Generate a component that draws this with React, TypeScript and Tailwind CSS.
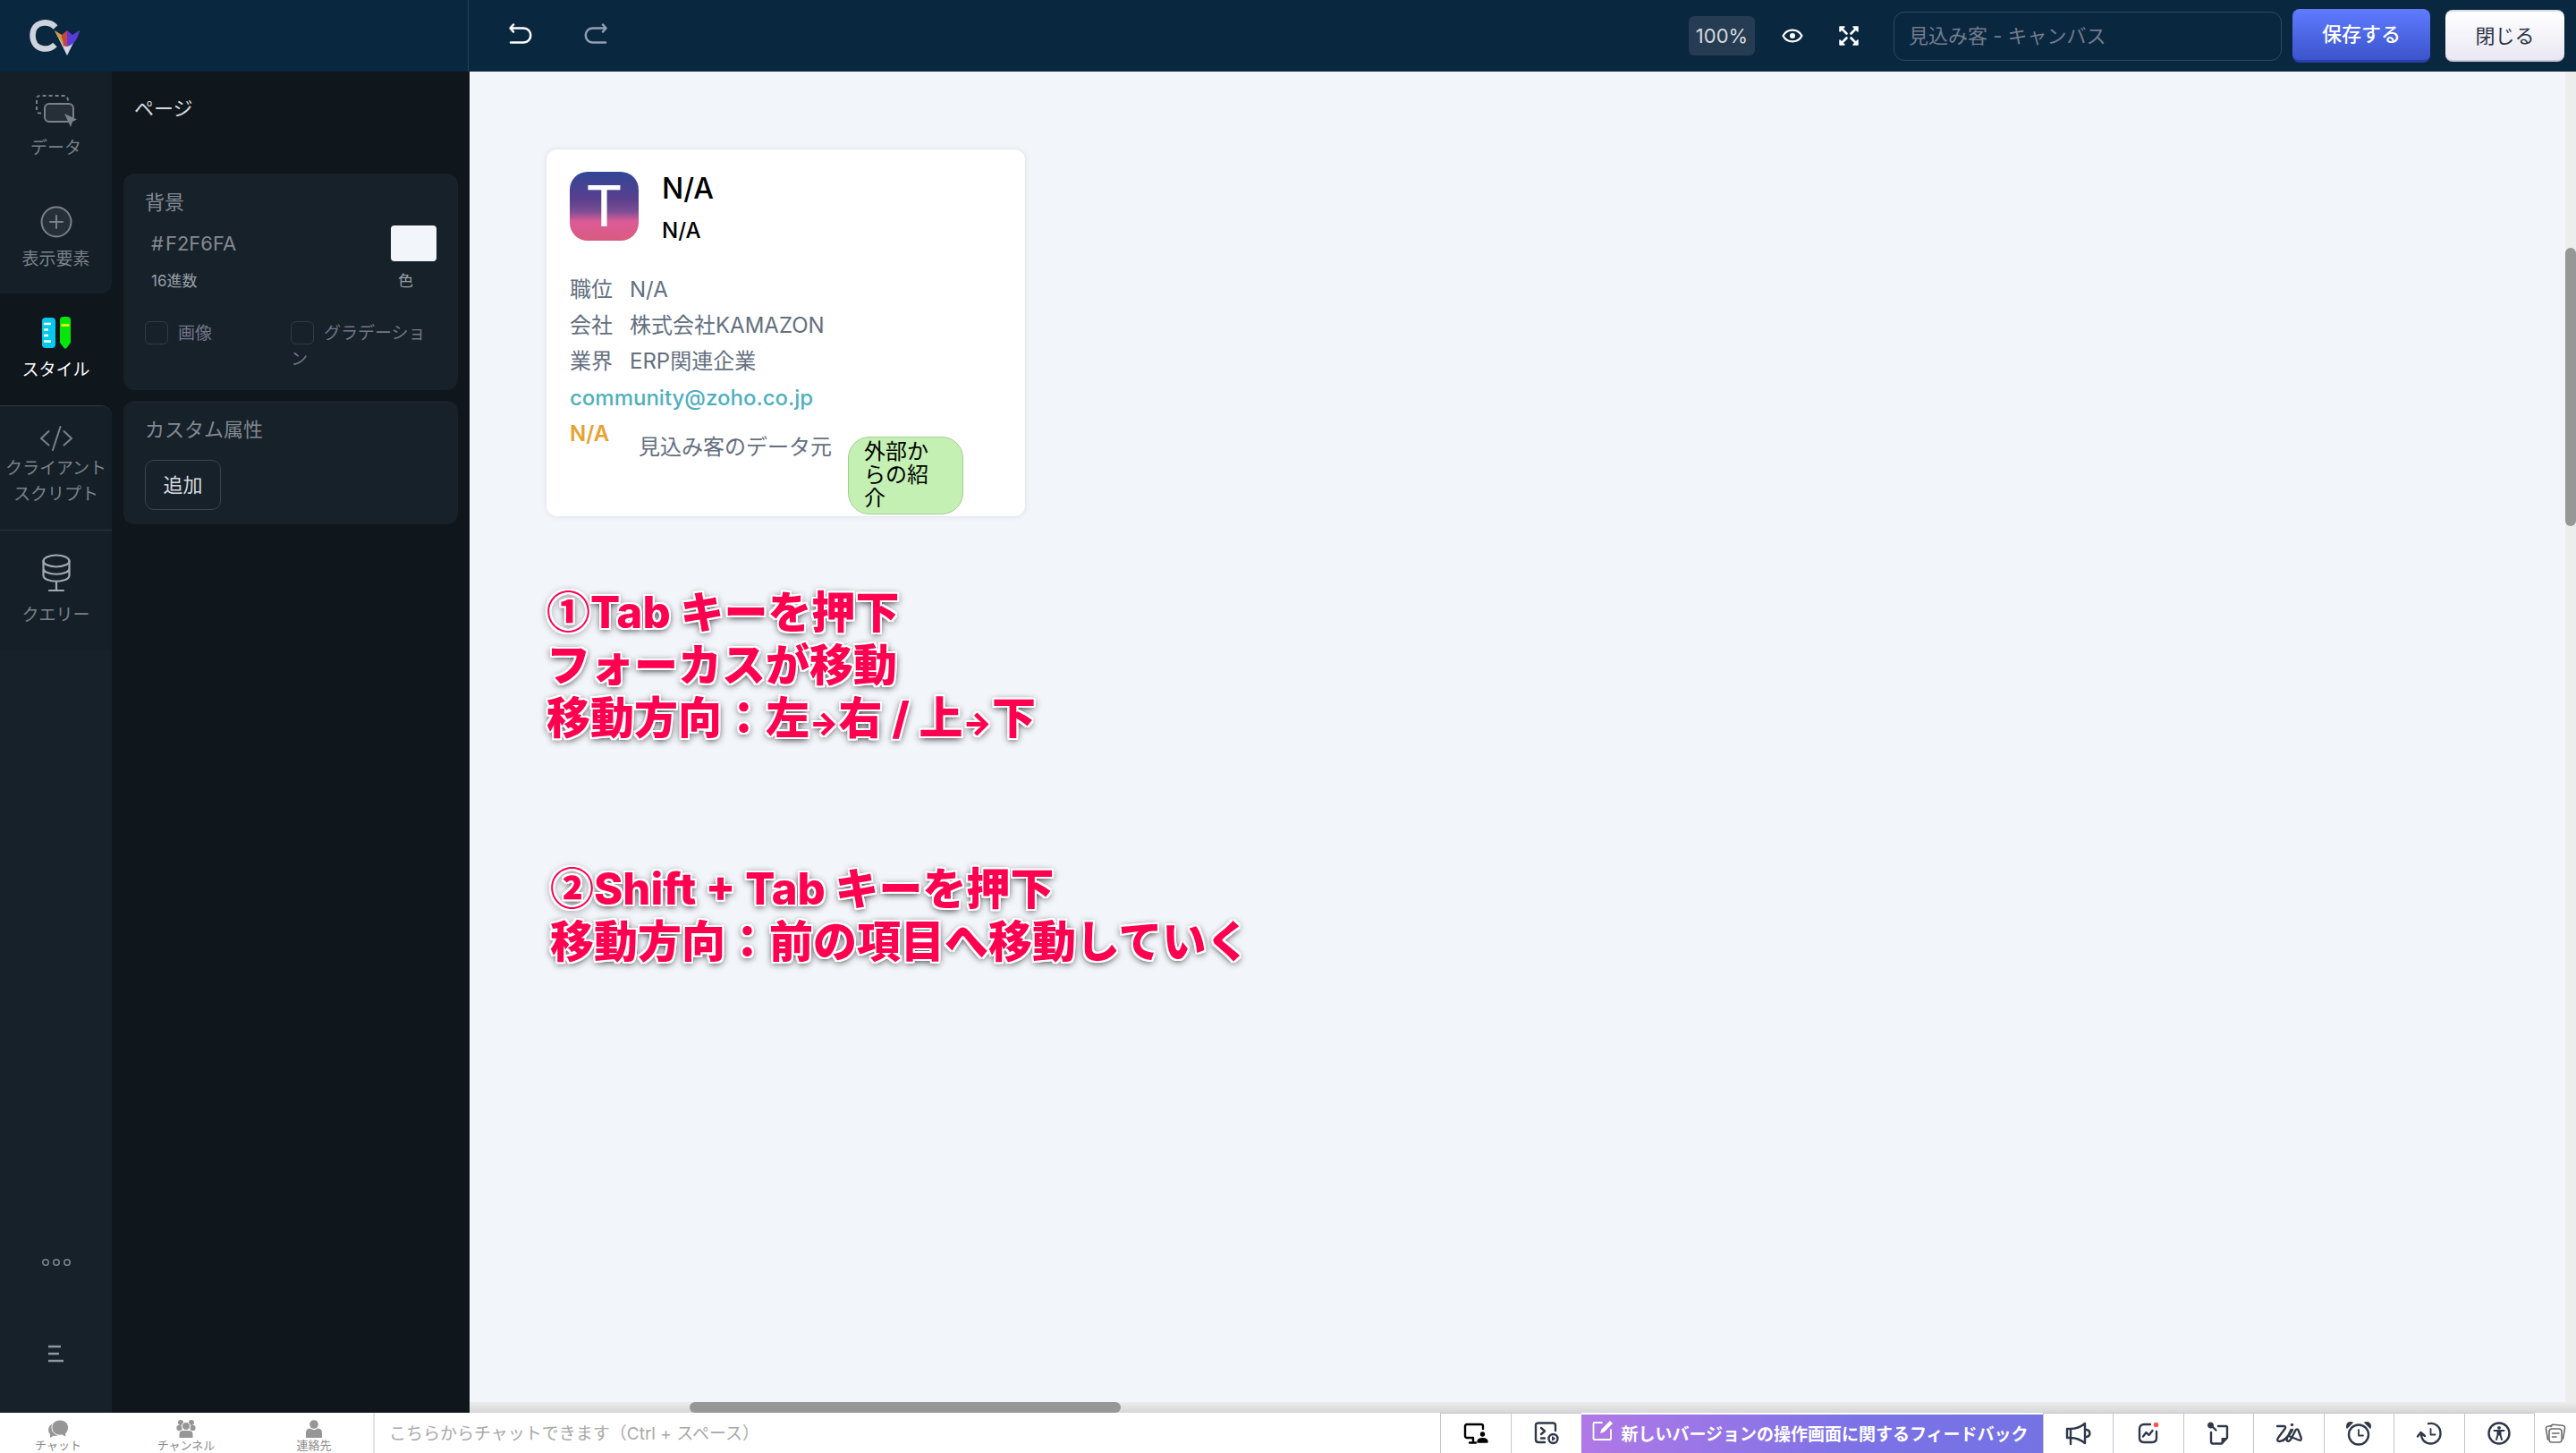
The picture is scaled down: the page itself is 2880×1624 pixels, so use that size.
import React from "react";

const stroke = { fill: "none", stroke: "currentColor", strokeLinecap: "round" as const, strokeLinejoin: "round" as const };

function Logo() {
  return (
    <svg className="h-11 w-15" viewBox="0 0 60 44" aria-hidden="true">
      <path d="M33 12.500C29 8 24 7 19.500 7.500C11.500 8.500 7.500 14 7.500 21.500C7.500 29.500 12 35.500 19.500 36.500C24.500 37 29 35.500 32.500 32" fill="none" stroke="#cfd3dc" strokeWidth="6.500" />
      <path d="M32 16L46 44L60 16L46 31Z" fill="#d6d9e2" />
      <path d="M32 16L40 21L42 33.500Z" fill="#cf9a35" />
      <path d="M40 21L46 16V34L42 33.500Z" fill="#c4443f" />
      <path d="M46 16L52 21L60 16C58 25 54 32 46 34Z" fill="#5a3bd9" />
    </svg>
  );
}

function DataIcon() {
  return (
    <svg className="h-9 w-12" viewBox="0 0 48 36" {...stroke} strokeWidth="2">
      <path d="M7 20.500C3 21 2 19 2 17V5C2 2 3.500 1 6 1H32C36 1 37 3 37 8" strokeDasharray="4 3" strokeLinecap="butt" />
      <rect x="11" y="10" width="32" height="20" rx="5" fill="#262e38" />
      <path d="M33 21L47 27.500L42 30L40 36Z" fill="currentColor" stroke="none" />
    </svg>
  );
}

function PlusCircleIcon() {
  return (
    <svg className="size-9" viewBox="0 0 36 36" {...stroke} strokeWidth="2">
      <circle cx="18" cy="18" r="16.500" fill="#262e38" />
      <path d="M18 11V25M11 18H25" />
    </svg>
  );
}

function StyleIcon() {
  return (
    <svg className="h-9 w-8" viewBox="0 0 32 36">
      <rect x="0" y="1" width="15" height="34" rx="4" fill="#06c8ea" />
      <path d="M2 8H10M2 14.500H7M2 21H7M2 27.500H10" stroke="#fff" strokeWidth="2.500" />
      <path d="M24 0C21 0 20 1.500 20 4V29L25 35.500H27L32 29V4C32 1.500 31 0 28 0Z" fill="#06e60d" />
      <path d="M21.500 9.500H30.500" stroke="#fff200" strokeWidth="2.500" />
    </svg>
  );
}

function CodeIcon() {
  return (
    <svg className="h-7 w-9" viewBox="0 0 36 28" {...stroke} strokeWidth="2">
      <path d="M9.500 6L1 14L9.500 21.500M26.500 6L35 14L26.500 21.500M22.500 1L14 27" />
    </svg>
  );
}

function DatabaseIcon() {
  return (
    <svg className="h-11 w-8" viewBox="0 0 32 44" {...stroke} strokeWidth="2.200">
      <ellipse cx="16" cy="8" rx="14.500" ry="6.500" />
      <path d="M1.500 8V24C1.500 33 30.500 33 30.500 24V8M1.500 16C1.500 25 30.500 25 30.500 16M16 31V41M8 41H24" />
    </svg>
  );
}

function NavItem({ label, icon, className }: { label: React.ReactNode; icon: React.ReactNode; className: string }) {
  return (
    <button type="button" className={`flex w-full flex-col items-center ${className}`}>
      {icon}
      <span className="text-center">{label}</span>
    </button>
  );
}

function Sidebar() {
  return (
    <nav className="flex w-[125px] shrink-0 flex-col bg-[#0f161c] text-[19px] leading-[29px] text-[#7b818a]">
      <div className="rounded-br-xl bg-[#141f27]">
        <NavItem className="h-[124px] gap-[9px] pt-[26px]" label="データ" icon={<DataIcon />} />
        <NavItem className="h-[124px] gap-[9px] pt-[26px]" label="表示要素" icon={<PlusCircleIcon />} />
      </div>
      <NavItem className="h-[125px] gap-[9px] pt-[26px] text-white" label="スタイル" icon={<StyleIcon />} />
      <div className="flex grow flex-col rounded-tr-xl border-t border-[#303842] bg-[#16212a]">
        <div className="rounded-tr-xl bg-[#141f27]">
          <NavItem
            className="h-[139px] gap-[5px] border-b border-[#303842] pt-[22px]"
            label={<>クライアント<br />スクリプト</>}
            icon={<CodeIcon />}
          />
          <NavItem
            className="h-[134px] gap-[10px] pt-[26px]"
            label="クエリー"
            icon={<span className="text-[#a3a9b2]"><DatabaseIcon /></span>}
          />
        </div>
        <div className="mt-auto flex flex-col items-center gap-[86px] pb-14">
          <button type="button" aria-label="その他">
            <svg className="h-3 w-8" viewBox="0 0 32 12" {...stroke} strokeWidth="1.600">
              <circle cx="4" cy="6" r="3.200" /><circle cx="16" cy="6" r="3.200" /><circle cx="28" cy="6" r="3.200" />
            </svg>
          </button>
          <button type="button" aria-label="メニュー">
            <svg className="h-5 w-[17px]" viewBox="0 0 17 20" {...stroke} strokeWidth="2.500" stroke="#8b98a5" strokeLinecap="butt">
              <path d="M0 2H14M0 10H12M0 18H17" />
            </svg>
          </button>
        </div>
      </div>
    </nav>
  );
}

function Check({ id, label }: { id: string; label: string }) {
  return (
    <div className="flex-1 text-[19px] leading-[29px] text-[#757587]">
      <input id={id} type="checkbox" className="mr-[11px] inline-block size-[26px] appearance-none rounded-md border border-[#2f3b48] align-[-6px]" />
      <label htmlFor={id}>{label}</label>
    </div>
  );
}

function StylePanel() {
  return (
    <aside className="flex w-[400px] shrink-0 flex-col bg-[#0f161c] px-[13px] text-[22px] leading-8 text-[#838991]">
      <h1 className="px-3 pt-[25px] text-[#d5dade]">ページ</h1>
      <section className="mt-[57px] h-[242px] rounded-xl bg-[#16212a] px-6 pt-4">
        <h2>背景</h2>
        <div className="mt-[10px] flex items-start justify-between">
          <div className="flex flex-col px-[7px]">
            <div className="flex h-10 items-center gap-0.5">
              <span>#</span>
              <input id="hex" defaultValue="F2F6FA" className="w-30 bg-transparent outline-none" />
            </div>
            <label htmlFor="hex" className="mt-2 text-[17px] leading-7 text-[#9a9fa8]">16進数</label>
          </div>
          <div className="flex w-[51px] flex-col">
            <button id="swatch" type="button" aria-label="背景色" className="h-10 rounded bg-[#f2f6fa]" />
            <label htmlFor="swatch" className="mt-2 pl-2 text-[17px] leading-7 text-[#9a9fa8]">色</label>
          </div>
        </div>
        <div className="mt-[30px] flex">
          <Check id="image" label="画像" />
          <Check id="gradient" label="グラデーション" />
        </div>
      </section>
      <section className="mt-3 h-[138px] rounded-xl bg-[#16212a] px-6 pt-4">
        <h2>カスタム属性</h2>
        <button type="button" className="mt-[18px] h-14 w-[85px] rounded-[10px] border border-[#3a4551] text-[#d5dade]">追加</button>
      </section>
    </aside>
  );
}

function Header() {
  return (
    <header className="flex h-20 shrink-0 items-center bg-[#0a2740] text-[22px]">
      <div className="flex h-full w-[524px] shrink-0 items-center border-r border-[#263f5c] pl-[29px]">
        <Logo />
      </div>
      <div className="flex items-center gap-[58px] pb-1 pl-[45px] text-white">
        <button type="button" aria-label="元に戻す">
          <svg className="h-6 w-[26px]" viewBox="0 0 26 24" {...stroke} strokeWidth="2.500">
            <path d="M5 1.500L1.500 5.500L5 9.500M2 5.500H16C27 5.500 27 21.500 16 21.500H2" />
          </svg>
        </button>
        <button type="button" aria-label="やり直す" className="text-[#92a0b0]">
          <svg className="h-6 w-[26px]" viewBox="0 0 26 24" {...stroke} strokeWidth="2.500">
            <path d="M21 1.500L24.500 5.500L21 9.500M24 5.500H10C-1 5.500 -1 21.500 10 21.500H24" />
          </svg>
        </button>
      </div>
      <div className="ml-auto flex items-center pr-[13px]">
        <button type="button" className="h-11 w-[74px] rounded-md bg-[#263c52] text-[#d5dade]">100%</button>
        <button type="button" aria-label="プレビュー" className="ml-[30px] text-white">
          <svg className="h-4 w-6" viewBox="0 0 24 16" {...stroke} strokeWidth="2.200">
            <path d="M1.500 8C6 -0.500 18 -0.500 22.500 8C18 16.500 6 16.500 1.500 8Z" />
            <circle cx="12" cy="8" r="3" fill="currentColor" stroke="none" />
          </svg>
        </button>
        <button type="button" aria-label="全画面" className="ml-[39px] text-white">
          <svg className="size-6" viewBox="0 0 24 24" {...stroke} strokeWidth="2.600">
            <path d="M5 5L9.500 9.500M19 5L14.500 9.500M19 19L14.500 14.500M5 19L9.500 14.500" />
            <path d="M2 2H7L2 7ZM22 2H17L22 7ZM22 22H17L22 17ZM2 22H7L2 17Z" strokeWidth="1.500" fill="currentColor" />
          </svg>
        </button>
        <input aria-label="キャンバス名" placeholder="見込み客 - キャンバス" className="ml-[38px] h-[55px] w-[434px] rounded-xl border border-[#2c4a61] bg-transparent px-4 outline-none placeholder:text-[#747c8b]" />
        <button type="button" className="ml-3 h-[60px] w-[154px] rounded-lg border-b-3 border-[#2b3fae] bg-linear-to-b from-[#5f7bff] to-[#3c54cc] font-medium text-white">保存する</button>
        <button type="button" className="ml-[17px] h-[58px] w-[133px] rounded-lg border-y-2 border-t-[#d8dbe8] border-b-[#c4c8d8] bg-linear-to-b from-white to-[#e9e8f3] text-[#2b3245]">閉じる</button>
      </div>
    </header>
  );
}

function Row({ name, value }: { name: string; value: string }) {
  return (
    <div className="flex h-10 items-center">
      <dt className="w-[67px]">{name}</dt>
      <dd>{value}</dd>
    </div>
  );
}

function LeadCard() {
  return (
    <article className="h-[410px] w-[535px] rounded-xl bg-white px-[26px] pt-[25px] text-[24px] text-[#646f80] shadow-[0_0_6px_rgba(0,0,0,0.1)]">
      <div className="flex gap-[26px]">
        <div className="flex size-[77px] items-center justify-center rounded-[20px] bg-[linear-gradient(#2f4796_0%,#5a3f8e_40%,#7a4e93_57%,#dc5b97_72%,#d95b80_100%)] pb-1">
          <span className="font-['Lato','Noto_Sans_CJK_JP',sans-serif] text-[64px] leading-none text-white">T</span>
        </div>
        <div className="font-medium text-black">
          <p className="text-[32px] leading-[38px]">N/A</p>
          <p className="mt-3 leading-8">N/A</p>
        </div>
      </div>
      <dl className="mt-[30px]">
        <Row name="職位" value="N/A" />
        <Row name="会社" value="株式会社KAMAZON" />
        <Row name="業界" value="ERP関連企業" />
      </dl>
      <a href="mailto:community@zoho.co.jp" className="block h-[42px] leading-[42px] font-medium text-[#4fb0bd]">community@zoho.co.jp</a>
      <div className="flex items-start">
        <span className="w-[77px] leading-[38px] font-semibold text-[#e9a12f]">N/A</span>
        <span className="mt-4 leading-9">見込み客のデータ元</span>
        <span className="mt-[22px] ml-[18px] h-[87px] w-[129px] rounded-[24px] border border-[#9fcf93] bg-[#c5f0b4] pt-[3px] pr-9 pl-[17px] leading-[26px] text-black">外部からの紹介</span>
      </div>
    </article>
  );
}

function Note({ children, className }: { children: React.ReactNode; className: string }) {
  return (
    <p className={`font-['Inter','Noto_Sans_CJK_JP',sans-serif] text-[49px] leading-[59px] font-extrabold text-[#ff0050] [text-shadow:2px_0_white,-2px_0_white,0_2px_white,0_-2px_white,2px_2px_white,-2px_2px_white,2px_-2px_white,-2px_-2px_white,0_2px_8px_black] ${className}`}>
      {children}
    </p>
  );
}

function Arrow() {
  return <span className="text-[34px] leading-none font-black">→</span>;
}

function Step({ children }: { children: string }) {
  return <span className="font-['Noto_Sans_CJK_JP',sans-serif]">{children}</span>;
}

function Canvas() {
  return (
    <div className="flex min-w-0 grow flex-col">
      <div className="flex grow">
        <main className="grow bg-[#f2f5fa] px-[86px] pt-[87px]">
          <LeadCard />
          <Note className="mt-[74px]">
            <Step>①</Step>Tab キーを押下<br />フォーカスが移動<br />移動方向：左<Arrow />右 / 上<Arrow />下
          </Note>
          <Note className="mt-[128px] pl-1">
            <Step>②</Step>Shift + Tab キーを押下<br />移動方向：前の項目へ移動していく
          </Note>
        </main>
        <div className="w-3 shrink-0 bg-[#ededed] pt-[197px]">
          <div className="h-[311px] rounded-md bg-[#979797]" />
        </div>
      </div>
      <div className="h-3 shrink-0 bg-linear-to-b from-[#ededed] to-[#d6d6d6] pl-[246px]">
        <div className="h-3 w-[482px] rounded-md bg-[#979797]" />
      </div>
    </div>
  );
}

function ChatTab({ label, children }: { label: string; children: React.ReactNode }) {
  return (
    <button type="button" className="flex w-[130px] flex-col items-center text-[13px] leading-4 text-[#8b8b8b]">
      <svg className="h-5 w-6" viewBox="0 0 24 20" fill="#969696">{children}</svg>
      {label}
    </button>
  );
}

function Tool({ label, children }: { label: string; children: React.ReactNode }) {
  return (
    <button type="button" aria-label={label} className="flex flex-1 items-center justify-center border-t border-l border-[#c6c4d3] text-[#2f3849]">
      <svg className="h-7 w-8" viewBox="0 0 32 28" {...stroke} strokeWidth="2.400">{children}</svg>
    </button>
  );
}

function Footer() {
  return (
    <footer className="flex h-[45px] shrink-0 bg-white">
      <div className="flex w-[419px] shrink-0 gap-[13px] border-r-2 border-[#e4e4e4] pt-2">
        <ChatTab label="チャット">
          <ellipse cx="8.500" cy="11" rx="7.500" ry="7" /><path d="M3 15V20L8 17Z" />
          <g stroke="#fff" strokeWidth="1"><path d="M14 0C19 0 23.500 3.500 23.500 8.500C23.500 12 22 14 20.500 15.500L21 19.500L16.500 17C9 18 5 13.500 5 8.500C5 3.500 9 0 14 0Z" /></g>
        </ChatTab>
        <ChatTab label="チャンネル">
          <circle cx="6" cy="3" r="3" /><circle cx="18" cy="3" r="3" />
          <rect x="1.500" y="6" width="6" height="6" rx="2" /><rect x="16.500" y="6" width="6" height="6" rx="2" />
          <g stroke="#fff" strokeWidth="1"><circle cx="12" cy="7" r="4.500" /><path d="M4 20.500V16C4 13 6 11.500 9 11.500H15C18 11.500 20 13 20 16V20.500Z" /></g>
        </ChatTab>
        <ChatTab label="連絡先">
          <circle cx="12" cy="5" r="4.800" /><path d="M3 20V14C3 11 5 9.500 8 9.500Q12 13 16 9.500C19 9.500 21 11 21 14V20Z" />
        </ChatTab>
      </div>
      <input aria-label="チャット" placeholder="こちらからチャットできます（Ctrl + スペース）" className="min-w-0 grow px-4 pt-1 text-[19px] outline-none placeholder:text-[#a9a9a9]" />
      <div className="flex w-[158px] shrink-0">
        <Tool label="画面共有">
          <g stroke="#000"><path d="M13 19H6C5 19 4 18 4 17V6C4 5 5 4 6 4H22C23 4 24 5 24 6V9M13 19V24M9 24.500H16" /><circle cx="23.500" cy="15" r="1.500" fill="#000" /><path d="M18.500 23.500C18.500 19 28.500 19 28.500 23.500Z" fill="#000" /></g>
        </Tool>
        <Tool label="ミーティング">
          <path d="M14 24H7C5 24 4 23 4 21V5C4 3.500 5 2.500 7 2.500H23C25 2.500 26 3.500 26 5V11M10 8L14 11.500L10 15M10 19.500H14" /><circle cx="23.500" cy="20" r="5" /><path d="M22.500 18V22L25.500 20Z" strokeWidth="1" fill="currentColor" />
        </Tool>
      </div>
      <button type="button" className="mt-0.5 flex w-[516px] shrink-0 items-center justify-center gap-2 bg-linear-to-r from-[#b078e6] via-[#7b72e6] via-60% to-[#7573e4] pt-1 pr-1 text-[19px] font-bold text-white">
        <svg className="mb-3 h-6 w-6" viewBox="0 0 24 24" {...stroke} strokeWidth="1.800">
          <path d="M11 3H2.500C2 3 1.500 3.500 1.500 4V21C1.500 21.500 2 22 2.500 22H20C20.500 22 21 21.500 21 21V11" /><path d="M9 15L10.500 10.500L20 1L23 4L13.500 13.500Z" fill="currentColor" stroke="none" />
        </svg>
        新しいバージョンの操作画面に関するフィードバック
      </button>
      <div className="flex w-[549px] shrink-0">
        <Tool label="お知らせ">
          <path d="M3 9V19H7C13 19 18 21 23 25V3C18 7 13 9 7 9ZM7 9V26M25 10C29.500 11 29.500 17 25 18" />
        </Tool>
        <Tool label="分析">
          <path d="M18 4H11C8 4 6 6 6 9V19C6 22 8 24 11 24H20C23 24 25 22 25 19V12M10 17.500L13.500 13L16.500 16L20.500 11" /><circle cx="24.500" cy="4.500" r="2.800" fill="#ff5454" stroke="none" />
        </Tool>
        <Tool label="付箋">
          <path d="M7 13V23C7 24.500 8 25.500 9 25.500H19L25 19V7.500C25 6.500 24.500 6 23.500 6H15M7 5L12.500 10.500" /><path d="M19 25.500V19.500H25Z" fill="currentColor" strokeWidth="1" /><circle cx="6.500" cy="5" r="2.300" fill="currentColor" />
        </Tool>
        <Tool label="Zia">
          <path d="M3 6H10.500C12.500 6 12.500 7.500 11.500 9L4 19C2.500 21.500 3 23 5.500 23C11 23 15 18 20 10M18.500 10L14 19C12.500 23 15.500 24 18 21L23.500 10.500C24.500 9 26 9 26.500 10.500L29.500 18.500C30.500 21.500 29.500 22.500 27 21.500L16 17" /><circle cx="19.500" cy="4.500" r="1.700" fill="currentColor" stroke="none" />
        </Tool>
        <Tool label="リマインダー">
          <circle cx="16" cy="15.500" r="11" /><path d="M16 10V16.500H21" strokeWidth="1.800" /><path d="M3 8C2 3 5 1 9 2ZM29 8C30 3 27 1 23 2Z" fill="currentColor" strokeWidth="1.500" />
        </Tool>
        <Tool label="履歴">
          <path d="M15 3.200C23 1.500 28.500 7 28.500 14C28.500 21 23.500 25.500 17.500 25.500C11 25.500 7 21 7 14.500M3 17.500L6.500 13L11 17" /><path d="M17.500 9V15.500H22.500" strokeWidth="1.800" />
        </Tool>
        <Tool label="アクセシビリティ">
          <circle cx="16" cy="14" r="11.500" /><circle cx="16" cy="7.800" r="1.900" fill="currentColor" stroke="none" /><path d="M10.500 11H21.500M16 11.500V15.500M14.500 12V16L13 21M17.500 12V16L19 21" strokeWidth="2" />
        </Tool>
      </div>
      <button type="button" aria-label="メモ" className="flex w-[47px] shrink-0 items-center justify-center border-l border-[#c6c4d3] text-[#6c6c6c]">
        <svg className="size-6" viewBox="0 0 24 24" {...stroke} strokeWidth="1.600">
          <rect x="5" y="7" width="14" height="15" rx="3" /><path d="M8.500 12H16M8.500 16H13M3.500 19L1.500 7C1.300 5.500 2 4.500 3.500 4.300L7 3.500M7 4.500C7.500 3 8.500 2 10 2.200L20 3.300C22 3.600 22.800 4.500 22.500 6.500L20.500 18" />
        </svg>
      </button>
    </footer>
  );
}

export default function App() {
  return (
    <div className="flex min-h-screen flex-col overflow-x-hidden font-['Inter','Noto_Sans_CJK_JP',sans-serif]">
      <Header />
      <div className="flex grow">
        <Sidebar />
        <StylePanel />
        <Canvas />
      </div>
      <Footer />
    </div>
  );
}
